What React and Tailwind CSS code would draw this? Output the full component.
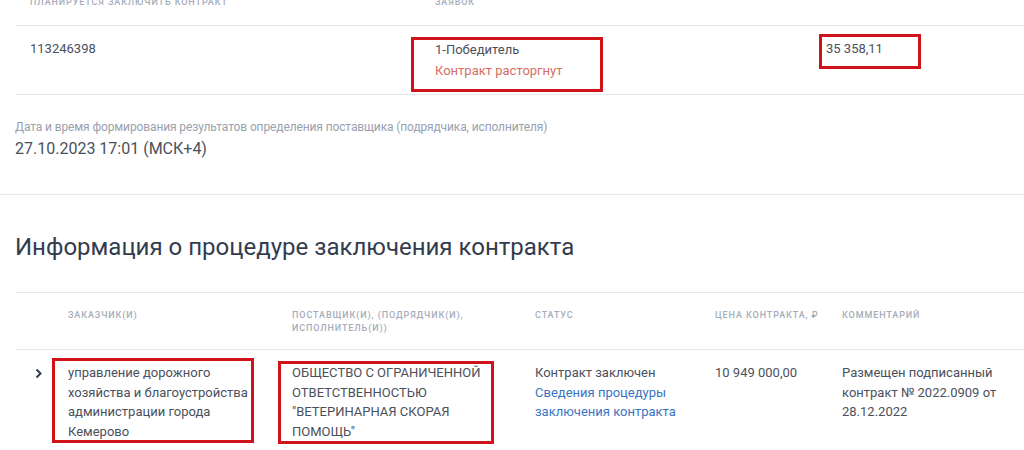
import React from 'react';

// Колонки таблицы заключения контракта
const columns = [
  { title: 'Заказчик(и)', cls: 'w-[224px] pl-3 pr-5' },
  { title: 'Поставщик(и), (подрядчик(и), исполнитель(и))', cls: 'w-[243px] pl-3 pr-9' },
  { title: 'Статус', cls: 'w-[180px] pl-3 pr-3' },
  { title: 'Цена контракта, ₽', cls: 'w-[127px] pl-3 pr-1' },
  { title: 'Комментарий', cls: 'flex-1 pl-3 pr-[22px]' },
];

function Mark({ className }) {
  return <div className={`absolute border-[3px] border-[#d0121b] pointer-events-none ${className}`} />;
}

function HeadCell({ children, className = '' }) {
  return (
    <div className={`text-[9px] leading-[13px] font-medium uppercase tracking-[0.1em] text-[#a5acba] ${className}`}>
      {children}
    </div>
  );
}

export default function App() {
  return (
    <div
      className="w-[1024px] h-[450px] overflow-hidden bg-white text-[#4b505c]"
      style={{ fontFamily: 'Roboto, "Liberation Sans", sans-serif' }}
    >
      {/* Участники */}
      <div className="ml-[15px]">
        <div className="grid grid-cols-[405px_391px_1fr] h-[26px] border-b border-[#e6e8ec]">
          <HeadCell className="pl-[15px] -mt-[4px]">Планируется заключить контракт</HeadCell>
          <HeadCell className="pl-[15px] -mt-[4px]">Заявок</HeadCell>
          <div />
        </div>
        <div className="grid grid-cols-[405px_391px_1fr] h-[69px] border-b border-[#e6e8ec] text-[13px] leading-[21px]">
          <div className="pl-[15px] pt-[12px]">113246398</div>
          <div className="pl-[15px] pt-[13px] relative">
            <div>1-Победитель</div>
            <div className="text-[#d46f62]">Контракт расторгнут</div>
            <Mark className="left-[-9px] top-[11px] w-[192px] h-[55px]" />
          </div>
          <div className="pl-[15px] pt-[12px] relative">
            <div>35 358,11</div>
            <Mark className="left-[8px] top-[8px] w-[102px] h-[35px]" />
          </div>
        </div>
      </div>

      {/* Дата формирования */}
      <div className="pl-[15px] pt-[25px] h-[99px]">
        <div className="text-[12px] leading-[15px] text-[#9aa1ae] tracking-[-0.01em]">
          Дата и время формирования результатов определения поставщика (подрядчика, исполнителя)
        </div>
        <div className="text-[16px] leading-[24px] mt-[2px]">27.10.2023 17:01 (МСК+4)</div>
      </div>
      <div className="border-t border-[#e6e8ec]" />

      {/* Информация о процедуре */}
      <div className="ml-[15px]">
        <h2 className="text-[24px] leading-[32px] text-[#333c4e] pt-[36px] pb-[29px] border-b border-[#e6e8ec]">
          Информация о процедуре заключения контракта
        </h2>

        <div className="flex h-[57px] border-b border-[#e6e8ec] pt-[16px]">
          <div className="w-[41px]" />
          {columns.map((c) => (
            <div key={c.title} className={c.cls}>
              <HeadCell>{c.title}</HeadCell>
            </div>
          ))}
        </div>

        <div className="flex pt-[13px] text-[13px] leading-[19.5px]">
          <div className="w-[41px] flex justify-end pr-[14px] pt-[5px]">
            <svg width="7" height="11" viewBox="0 0 7 11" fill="none">
              <polyline points="1.5,1.5 5.5,5.5 1.5,9.5" stroke="#333c4e" strokeWidth="2" />
            </svg>
          </div>
          <div className={`${columns[0].cls} relative`}>
            управление дорожного хозяйства и благоустройства администрации города Кемерово
            <Mark className="left-[-4px] top-[-5px] w-[202px] h-[85px]" />
          </div>
          <div className={`${columns[1].cls} relative`}>
            ОБЩЕСТВО С ОГРАНИЧЕННОЙ ОТВЕТСТВЕННОСТЬЮ "ВЕТЕРИНАРНАЯ СКОРАЯ ПОМОЩЬ"
            <Mark className="left-[-2px] top-[-2px] w-[216px] h-[83px]" />
          </div>
          <div className={columns[2].cls}>
            <div>Контракт заключен</div>
            <a className="text-[#3b74c2]">Сведения процедуры заключения контракта</a>
          </div>
          <div className={columns[3].cls}>10 949 000,00</div>
          <div className={columns[4].cls}>Размещен подписанный контракт № 2022.0909 от 28.12.2022</div>
        </div>
      </div>
    </div>
  );
}
